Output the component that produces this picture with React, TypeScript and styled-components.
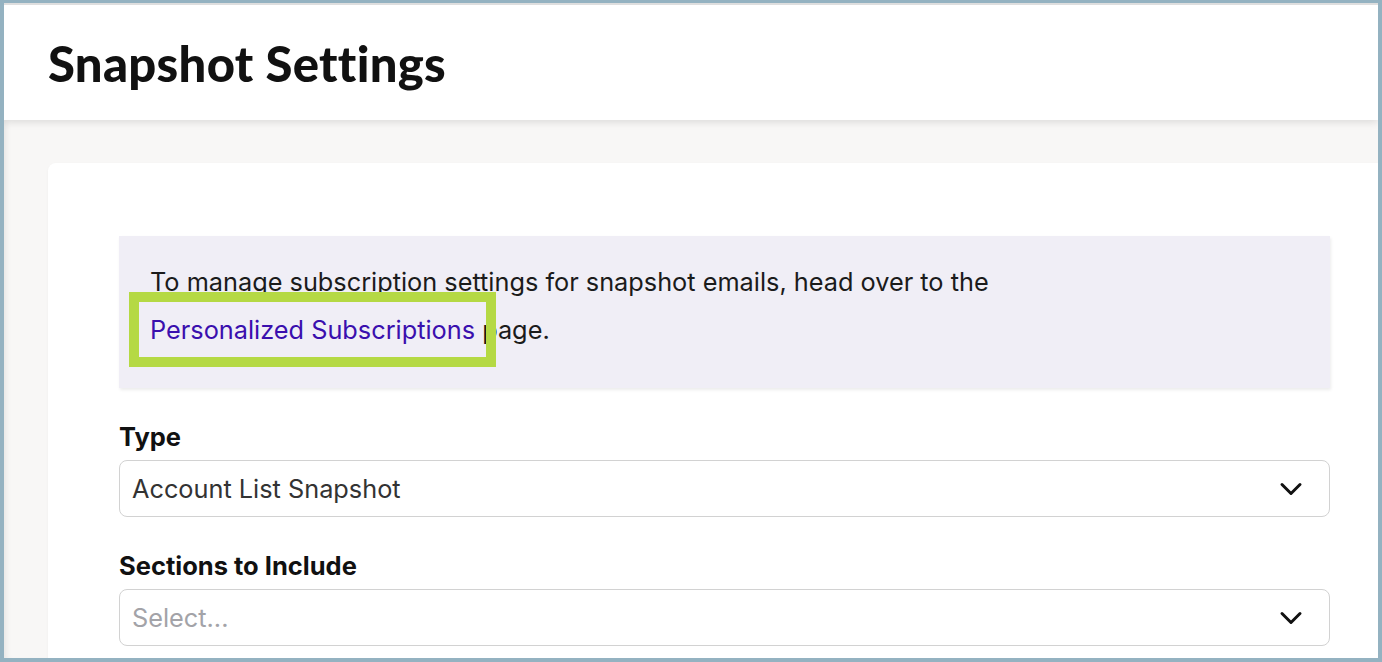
import React from "react";
import styled, { createGlobalStyle } from "styled-components";
import { ChevronDown } from "lucide-react";

const GlobalStyle = createGlobalStyle`
  html, body { margin: 0; padding: 0; }
  body { font-family: Inter, "Noto Sans", sans-serif; background: #94b2c1; }
  * { box-sizing: border-box; }
`;

const Frame = styled.div`
  width: 1382px;
  height: 662px;
  border: 4px solid #94b2c1;
  border-top-width: 3px;
  background: #f8f7f6;
  overflow: hidden;
  display: flex;
  flex-direction: column;
  position: relative;
  box-shadow: inset 6px 0 6px -4px rgba(0, 0, 0, 0.08);
`;

const Header = styled.header`
  flex: 0 0 117px;
  background: #ffffff;
  border-top: 2px solid #dedede;
  display: flex;
  align-items: center;
  padding-left: 44px;
  box-shadow: 0 2px 8px rgba(0, 0, 0, 0.12);
  position: relative;
  z-index: 1;
`;

const Title = styled.h1`
  margin: 0;
  font-family: Lato, "Noto Sans", sans-serif;
  font-weight: 900;
  font-size: 49px;
  color: #111111;
  letter-spacing: 0.3px;
`;

const Main = styled.main`
  flex: 1;
  padding: 43px 0 0 44px;
`;

const Card = styled.section`
  width: 1353px;
  background: #ffffff;
  border-radius: 8px;
  padding: 73px 71px;
  display: flex;
  flex-direction: column;
  box-shadow: 0 1px 3px rgba(0, 0, 0, 0.04);
`;

const Notice = styled.div`
  background: #f0eef6;
  padding: 22px 31px 34px;
  box-shadow: 1px 2px 3px rgba(0, 0, 0, 0.08);
  margin-bottom: 34px;
`;

const NoticeText = styled.p`
  margin: 0;
  font-size: 25.3px;
  line-height: 48px;
  color: #1b1b1b;
`;

const Link = styled.a`
  color: #3a0fae;
  text-decoration: none;
  outline: 10px solid #b5d944;
  outline-offset: 11px;
  padding: 1px 0;
`;

const Field = styled.div`
  display: flex;
  flex-direction: column;
  gap: 8px;
  margin-bottom: 34px;
`;

const Label = styled.label`
  font-size: 25.5px;
  font-weight: 700;
  line-height: 30px;
  color: #111111;
`;

const Select = styled.div<{ $placeholder?: boolean }>`
  height: 57px;
  border: 1px solid #d2d2d2;
  border-radius: 8px;
  display: flex;
  align-items: center;
  justify-content: space-between;
  padding: 0 20px 0 12px;
  font-size: 25.3px;
  color: ${(p) => (p.$placeholder ? "#a3a3a8" : "#333333")};
  background: #ffffff;
`;

const Chevron = styled(ChevronDown)`
  color: #111111;
  flex: none;
`;

export default function App() {
  return (
    <>
      <GlobalStyle />
      <Frame>
        <Header>
          <Title>Snapshot Settings</Title>
        </Header>
        <Main>
          <Card>
            <Notice>
              <NoticeText>
                To manage subscription settings for snapshot emails, head over to the
                <br />
                <Link href="#">Personalized Subscriptions</Link> page.
              </NoticeText>
            </Notice>
            <Field>
              <Label>Type</Label>
              <Select>
                <span>Account List Snapshot</span>
                <Chevron size={36} strokeWidth={2} />
              </Select>
            </Field>
            <Field>
              <Label>Sections to Include</Label>
              <Select $placeholder>
                <span>Select...</span>
                <Chevron size={36} strokeWidth={2} />
              </Select>
            </Field>
          </Card>
        </Main>
      </Frame>
    </>
  );
}
